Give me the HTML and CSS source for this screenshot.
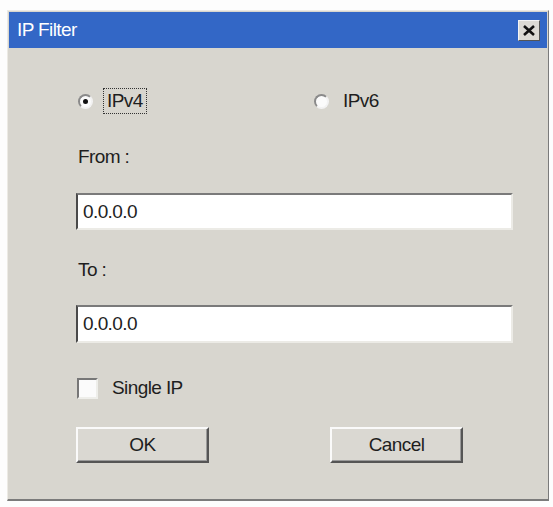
FILE: index.html
```html
<!DOCTYPE html>
<html lang="en">
<head>
  <meta charset="UTF-8" />
  <title>IP Filter</title>
  <link rel="stylesheet" href="styles.css">
</head>
<body>
  <div class="dialog">
    <div class="titlebar">
      <span class="title">IP Filter</span>
      <span class="close">
        <svg width="12" height="11" viewBox="0 0 12 11">
          <path d="M1 1 L11 10 M11 1 L1 10" stroke="#111" stroke-width="2.6" />
        </svg>
      </span>
    </div>

    <div class="content">
      <div class="row radios">
        <label class="radio checked">
          <span class="dot"></span>
          <span class="text focus">IPv4</span>
        </label>
        <label class="radio">
          <span class="dot"></span>
          <span class="text">IPv6</span>
        </label>
      </div>

      <div class="caption caption-from">From :</div>
      <input class="field field-from" type="text" value="0.0.0.0" />

      <div class="caption caption-to">To :</div>
      <input class="field field-to" type="text" value="0.0.0.0" />

      <label class="row check">
        <span class="box"></span>
        <span class="text">Single IP</span>
      </label>

      <div class="buttons">
        <button class="btn">OK</button>
        <button class="btn">Cancel</button>
      </div>
    </div>
  </div>
</body>
</html>
```

FILE: styles.css
```css
body {
  margin: 0;
  background: #fdfdfd;
  font-family: 'Liberation Sans', Arial, sans-serif;
  font-size: 19px;
  letter-spacing: -0.6px;
  color: #1e1e1e;
}

.dialog {
  box-sizing: border-box;
  width: 542px;
  height: 491px;
  margin: 10px 0 0 7px;
  background: #d8d6cf;
  border: 1px solid #eceae4;
  border-right-color: #7b7b7b;
  border-bottom: 2px solid #7b7b7b;
}

.titlebar {
  height: 36px;
  margin: 1px 1px 0;
  background: #3367c6;
  display: flex;
  align-items: center;
  justify-content: space-between;
  padding: 0 7px 0 8px;
}
.title {
  color: #fff;
  font-size: 19px;
}
.close {
  width: 20px;
  height: 19px;
  display: flex;
  align-items: center;
  justify-content: center;
  background: #dcdad4;
  border: 1px solid #f4f4f4;
  border-right-color: #555;
  border-bottom-color: #555;
}

.content {
  padding-left: 68px;
}

.row {
  display: flex;
  align-items: center;
}
.radios {
  height: 28px;
  margin-top: 39px;
}
.radio {
  display: flex;
  align-items: center;
  width: 255px;
  padding-left: 2px;
}
.radio .dot {
  box-sizing: border-box;
  width: 15px;
  height: 15px;
  border-radius: 50%;
  background: #fbfbfb;
  border: 2px solid #8a8a8a;
  border-right-color: #f2f2f2;
  border-bottom-color: #f2f2f2;
  display: flex;
  align-items: center;
  justify-content: center;
  margin-right: 10px;
}
.radio.checked .dot::after {
  content: "";
  width: 5px;
  height: 5px;
  border-radius: 50%;
  background: #111;
}
.radio .text {
  padding: 1px 3px;
  border: 1px dotted transparent;
}
.radio .text.focus {
  border-color: #333;
}

.caption {
  height: 24px;
  line-height: 24px;
  padding-left: 2px;
}
.caption-from {
  margin-top: 30px;
}
.caption-to {
  margin-top: 28px;
}

.field {
  display: block;
  box-sizing: border-box;
  width: 437px;
  height: 37px;
  padding: 0 5px;
  font: inherit;
  letter-spacing: inherit;
  color: #222;
  background: #fff;
  border: 2px solid #7a7a7a;
  border-left-color: #4a4a4a;
  border-right: 2px solid #ecebe6;
  border-bottom: 2px solid #ecebe6;
  outline: none;
}
.field-from {
  margin-top: 24px;
}
.field-to {
  margin-top: 23px;
  height: 38px;
}

.check {
  height: 24px;
  margin-top: 33px;
  padding-left: 1px;
}
.check .box {
  box-sizing: border-box;
  width: 21px;
  height: 21px;
  background: #fbfbfb;
  border: 2px solid #777;
  border-right-color: #eeeeea;
  border-bottom-color: #eeeeea;
  margin-right: 14px;
}

.buttons {
  display: flex;
  gap: 121px;
  margin-top: 27px;
}
.btn {
  box-sizing: border-box;
  width: 133px;
  height: 36px;
  font: inherit;
  letter-spacing: inherit;
  color: #1e1e1e;
  background: #dad8d2;
  border: 2px solid #fafafa;
  border-right-color: #555;
  border-bottom-color: #555;
  box-shadow: inset -1px -1px #9a9a9a;
  padding: 0;
}
```
